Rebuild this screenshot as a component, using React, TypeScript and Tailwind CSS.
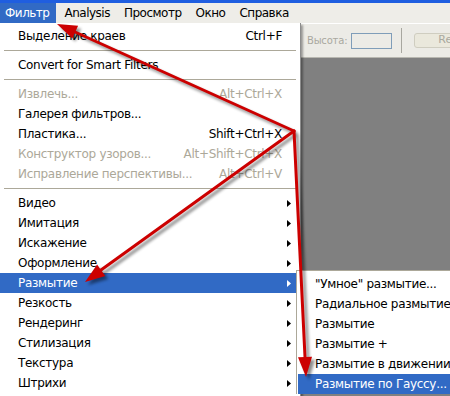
import React from "react";

type Row =
  | { label: string; sc?: string; dis?: boolean; sub?: boolean; hi?: boolean }
  | "sep";

const mainItems: Row[] = [
  { label: "Выделение краев", sc: "Ctrl+F" },
  "sep",
  { label: "Convert for Smart Filters" },
  "sep",
  { label: "Извлечь...", sc: "Alt+Ctrl+X", dis: true },
  { label: "Галерея фильтров..." },
  { label: "Пластика...", sc: "Shift+Ctrl+X" },
  { label: "Конструктор узоров...", sc: "Alt+Shift+Ctrl+X", dis: true },
  { label: "Исправление перспективы...", sc: "Alt+Ctrl+V", dis: true },
  "sep",
  { label: "Видео", sub: true },
  { label: "Имитация", sub: true },
  { label: "Искажение", sub: true },
  { label: "Оформление", sub: true },
  { label: "Размытие", sub: true, hi: true },
  { label: "Резкость", sub: true },
  { label: "Рендеринг", sub: true },
  { label: "Стилизация", sub: true },
  { label: "Текстура", sub: true },
  { label: "Штрихи", sub: true },
];

const subItems = [
  { label: '"Умное" размытие...' },
  { label: "Радиальное размытие..." },
  { label: "Размытие" },
  { label: "Размытие +" },
  { label: "Размытие в движении..." },
  { label: "Размытие по Гауссу...", hi: true },
];

function Tri({ white }: { white?: boolean }) {
  return (
    <svg width="4" height="7" viewBox="0 0 4 7">
      <path d="M0 0 L4 3.5 L0 7 Z" fill={white ? "#ffffff" : "#000000"} />
    </svg>
  );
}

function Arrows() {
  const lines = [
    { x1: 294, y1: 131, x2: 75, y2: 32, head: "57,24 78.1,25.8 72.3,38.6" },
    { x1: 294, y1: 131, x2: 101, y2: 270, head: "85,282 105.3,276 97.1,264.6" },
    { x1: 294, y1: 131, x2: 305, y2: 357, head: "306,377 312,356.7 298,357.3" },
  ];
  return (
    <svg
      className="absolute inset-0 pointer-events-none"
      width="450"
      height="396"
      viewBox="0 0 450 396"
    >
      <defs>
        <filter id="blur" x="-20%" y="-20%" width="140%" height="140%">
          <feGaussianBlur stdDeviation="1.6" />
        </filter>
      </defs>
      <g transform="translate(3,3)" filter="url(#blur)" opacity="0.45">
        {lines.map((l, i) => (
          <g key={i}>
            <line x1={l.x1} y1={l.y1} x2={l.x2} y2={l.y2} stroke="#000" strokeWidth="3" />
            <polygon points={l.head} fill="#000" />
          </g>
        ))}
      </g>
      {lines.map((l, i) => (
        <g key={i}>
          <line
            x1={l.x1}
            y1={l.y1}
            x2={l.x2}
            y2={l.y2}
            stroke="#cc0000"
            strokeWidth="3"
            strokeLinecap="round"
          />
          <polygon points={l.head} fill="#cc0000" />
        </g>
      ))}
    </svg>
  );
}

export default function App() {
  return (
    <div className="relative w-[450px] h-[396px] overflow-hidden flex flex-col bg-[#808080] font-['DejaVu_Sans',sans-serif] text-[12px] tracking-[-0.3px] text-black">
      {/* title bar remainder */}
      <div className="h-[3px] bg-[#1f5ee0]" />
      {/* menu bar */}
      <div className="h-[20px] bg-[#eeede8] flex items-stretch tracking-[-0.5px]">
        <div className="pl-[5px] pr-[7px] flex items-center bg-[#316ac5] text-white">Фильтр</div>
        <div className="px-[7px] ml-px flex items-center">Analysis</div>
        <div className="px-[7px] flex items-center">Просмотр</div>
        <div className="px-[7px] flex items-center">Окно</div>
        <div className="px-[7px] flex items-center">Справка</div>
      </div>
      <div className="h-px bg-white" />
      {/* options bar */}
      <div className="h-[34px] bg-[#ecebe6] border-b border-[#b8b7b0] flex items-center pl-[307px] tracking-normal">
        <span className="shrink-0 text-[10px] tracking-[-0.2px] text-[#a9a89f] whitespace-nowrap">Высота:</span>
        <div className="shrink-0 ml-[4px] w-[41px] h-[16px] border border-[#7f9db9] bg-[#ecebe6]" />
        <div className="shrink-0 ml-[9px] w-px h-[25px] bg-[#a8a7a0]" />
        <div className="shrink-0 ml-[12px] w-[60px] h-[15px] rounded-[3px] border border-[#cfcdc0] bg-[#eae8dc] flex items-center pl-[23px] text-[11px] text-[#a9a89f]">
          Refine
        </div>
      </div>
      {/* canvas */}
      <div className="flex-1 bg-[#808080]" />

      {/* main dropdown menu */}
      <div className="absolute left-0 top-[23px] w-[301px] bg-white border-r border-[#8d8d8d] shadow-[2px_2px_2px_rgba(0,0,0,0.35)] pt-[3px] pb-[3px] flex flex-col">
        {mainItems.map((it, i) =>
          it === "sep" ? (
            <div key={i} className="h-[9px] flex items-center px-[4px]">
              <div className="h-px w-full bg-[#aca899]" />
            </div>
          ) : (
            <div
              key={i}
              className={
                "h-[20px] flex items-center pl-[18px] pr-[9px] " +
                (it.hi ? "bg-[#316ac5] text-white " : "") +
                (it.dis ? "text-[#aca899]" : "")
              }
            >
              <span className="flex-1 whitespace-nowrap">{it.label}</span>
              {it.sc && <span className="whitespace-nowrap">{it.sc}</span>}
              <span className="w-[9px] flex justify-end">{it.sub && <Tri white={it.hi} />}</span>
            </div>
          )
        )}
      </div>

      {/* submenu */}
      <div className="absolute left-[296px] top-[270px] w-[154px] bg-white border-l border-t border-[#aca899] pt-[3px] pl-px flex flex-col">
        {subItems.map((it, i) => (
          <div
            key={i}
            className={
              "h-[20px] flex items-center pl-[17px] whitespace-nowrap overflow-hidden " +
              (it.hi ? "bg-[#316ac5] text-white" : "")
            }
          >
            {it.label}
          </div>
        ))}
      </div>

      <Arrows />
    </div>
  );
}
